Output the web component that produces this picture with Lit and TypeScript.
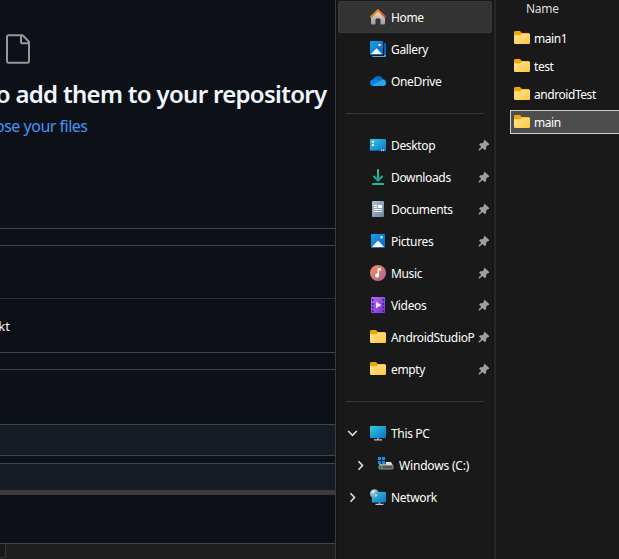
import { LitElement, html, css, svg, nothing } from "lit";
import { customElement, property } from "lit/decorators.js";

const folder = svg`
  <path d="M0 2.400Q0 1 1.400 1H6l1.800 2H15v5H0z" fill="#f2a600"/>
  <path d="M0 5.200h6.200L8 3.400h6.800q1.200 0 1.200 1.200v8.200q0 1.200-1.200 1.200H1.200Q0 14 0 12.800z" fill="url(#fold)"/>`;

const icons: Record<string, unknown> = {
  home: svg`
    <path d="M1 7.500 8 1.500l7 6V14.500q0 1-1 1h-3.500v-5q0-1-1-1h-3q-1 0-1 1v5H2q-1 0-1-1z" fill="url(#house)"/>
    <path d="M1 7.700 8 1.300l7 6.400" fill="none" stroke="url(#roof)" stroke-width="2" stroke-linecap="round" stroke-linejoin="round"/>`,
  gallery: svg`
    <path d="M2 14h11.500V2.500H15q1 0 1 1V15q0 1-1 1H3q-1 0-1-1z" fill="#5ba5e4"/>
    <path d="M13 2.500H15q1 0 1 1V14h-3z" fill="#0860ae"/>
    <path d="M13 1h1v14H1v-1h12z" fill="#191919"/>
    <rect width="13" height="14" rx="1" fill="url(#blue)"/>
    <rect x="8.500" y="3" width="2" height="2" fill="#fff"/>
    <path d="M1 13 6.500 7.200 12 13z" fill="#f4f9ff"/>`,
  cloud: svg`
    <path d="M3 7.300Q4.300 3 8.200 3q3.600 0 4.800 3.400l-3 4.600H3z" fill="#0a6bc8"/>
    <path d="M3.800 6.200Q0 6.500 0 9.800 0 13 3.800 13H9l3-4Q7.500 5.700 3.800 6.200z" fill="#0f80dd"/>
    <path d="M2 12.500 10 8q2-2 4-1.500 2 .8 2 3.500 0 3-3 3H4q-1.200 0-2-.5z" fill="#28a8ea"/>`,
  desktop: svg`
    <rect y="2" width="16" height="12" rx="1" fill="url(#desk)"/>
    <path d="M2 4h2v2H2zM2 7h2v2H2z" fill="#fff"/>
    <path d="M1 13h14v1H1z" fill="#0c5fa8"/>
    <path d="M11 12.600h1.200v1.200H11zM13 12.600h1.200v1.200H13z" fill="#e5f6ff"/>`,
  download: svg`
    <path d="M8 .3v11.200M3.500 7 8 11.500 12.500 7" fill="none" stroke="url(#down)" stroke-width="2"/>
    <rect x="2" y="14" width="12" height="2" rx=".6" fill="#22ba92"/>`,
  document: svg`
    <rect x="2" width="12" height="16" rx="1" fill="url(#doc)"/>
    <path d="M4 4h3v1H4zM4 6h3v1H4zM8 4h4v3H8zM4 8h8v1H4zM4 10h8v1H4z" fill="#fff"/>`,
  picture: svg`
    <rect x="1" y="1" width="14" height="14" rx="1" fill="url(#blue)"/>
    <circle cx="11.500" cy="4.300" r="1.200" fill="#d9f2ff"/>
    <path d="M2 14 7.200 8.300q.8-.8 1.600 0L14 14z" fill="#f8fbff"/>`,
  music: svg`
    <circle cx="8" cy="8" r="8" fill="url(#note)"/>
    <circle cx="7" cy="10.600" r="2" fill="#fff"/>
    <path d="M7.500 3.300H11v2.200H9v5.100H7.500z" fill="#fff"/>`,
  video: svg`
    <rect x="1" width="14" height="16" rx="1" fill="url(#film)"/>
    <path d="M2 2h1.500v2H2zM2 6h1.500v2H2zM2 9.500h1.500v2H2zM2 13h1.500v2H2zM12.500 2H14v2h-1.500zM12.500 6H14v2h-1.500zM12.500 9.500H14v2h-1.500zM12.500 13H14v2h-1.500z" fill="#4b1b96"/>
    <path d="M6 4.800v6.400L11.300 8z" fill="#f4ebff"/>`,
  folder,
  pc: svg`
    <path d="M7 13h2v2H7z" fill="#7b8790"/><path d="M4 14.300h8v1.200H4z" fill="#bcc7cf"/>
    <rect y="1" width="16" height="12" rx=".8" fill="url(#desk)"/>`,
  drive: svg`
    <path d="M2 5h11l2 3.500H1z" fill="#dfe1e2"/>
    <path d="M0 0h7.800v7.300H0z" fill="#191919"/>
    <path d="M0 0h3v3H0zM4 0h3v3H4zM0 4h3v3H0zM4 4h3v3H4z" fill="#1492e6"/>
    <rect x="1" y="8.200" width="14" height="3.800" rx=".6" fill="#515456" stroke="#aaadae" stroke-width=".8"/>
    <path d="M3 9.200h1.600v1.600H3z" fill="#22dd45"/>`,
  network: svg`
    <path d="M8.500 13h2v2h-2z" fill="#7b8790"/><path d="M5.500 14.800h8V16h-8z" fill="#bcc7cf"/>
    <rect x="2" y="3" width="14" height="10.500" rx=".8" fill="url(#desk)"/>
    <circle cx="4.500" cy="4.700" r="4.500" fill="url(#globe)"/>
    <path d="M2 2.200 4.300.9l1.300 1.400-1.700 1.900-2 .5zM4.600 5.200l2.200.2.400 1.400-1.700 1.500z" fill="#e4f1f7" opacity=".8"/>`,
};

interface Item {
  label: string;
  icon: string;
  pin?: boolean;
  chevron?: "open" | "closed";
  nested?: boolean;
  selected?: boolean;
}

const groups: Item[][] = [
  [
    { label: "Home", icon: "home", selected: true },
    { label: "Gallery", icon: "gallery" },
    { label: "OneDrive", icon: "cloud" },
  ],
  [
    { label: "Desktop", icon: "desktop", pin: true },
    { label: "Downloads", icon: "download", pin: true },
    { label: "Documents", icon: "document", pin: true },
    { label: "Pictures", icon: "picture", pin: true },
    { label: "Music", icon: "music", pin: true },
    { label: "Videos", icon: "video", pin: true },
    { label: "AndroidStudioP", icon: "folder", pin: true },
    { label: "empty", icon: "folder", pin: true },
  ],
  [
    { label: "This PC", icon: "pc", chevron: "open" },
    { label: "Windows (C:)", icon: "drive", chevron: "closed", nested: true },
    { label: "Network", icon: "network", chevron: "closed" },
  ],
];

@customElement("file-icon")
export class FileIcon extends LitElement {
  @property() name = "folder";
  static styles = css`
    :host { display: block; width: 16px; height: 16px; flex: none; }
    svg { display: block; }
  `;
  private grad(id: string, from: string, to: string, vertical = false) {
    return svg`<linearGradient id=${id} x1="0" y1="0" x2=${vertical ? 0 : 1} y2="1">
      <stop stop-color=${from}/><stop offset="1" stop-color=${to}/></linearGradient>`;
  }
  render() {
    return html`<svg width="16" height="16" viewBox="0 0 16 16">
      <defs>
        ${this.grad("fold", "#ffe59a", "#ffc83a")}
        ${this.grad("house", "#e2e2e2", "#9b9b9b", true)}
        ${this.grad("roof", "#f9a01b", "#d9480f")}
        ${this.grad("blue", "#1ca0ee", "#0763bd")}
        ${this.grad("desk", "#30cfe5", "#0b6fc4")}
        ${this.grad("down", "#2ccf8c", "#14a3a0", true)}
        ${this.grad("doc", "#b0c2d8", "#6a819f")}
        ${this.grad("note", "#f49352", "#a9609f")}
        ${this.grad("film", "#b06bf2", "#7a35d4")}
        ${this.grad("globe", "#b9e2f2", "#2a7fa8")}
      </defs>
      ${icons[this.name] ?? nothing}
    </svg>`;
  }
}

@customElement("nav-row")
export class NavRow extends LitElement {
  @property({ attribute: false }) item!: Item;
  static styles = css`
    .row {
      box-sizing: border-box; height: 32px; display: flex; align-items: center;
      padding-left: 5px; border: 1px solid transparent; border-radius: 2px;
    }
    .selected { background: #333; border-color: #3a3a3a; }
    .nested { padding-left: 13px; }
    .chevron { width: 16px; height: 16px; margin-right: 10px; flex: none; }
    .label {
      margin-left: 5px; padding-top: 2px; flex: 1; min-width: 0; white-space: nowrap;
      font: 12px/18px "Noto Sans", sans-serif; letter-spacing: -0.340px; color: #fff;
    }
    .nested .label { letter-spacing: -0.180px; }
    .pin { flex: none; width: 12px; height: 12px; margin: 0 1px 0 1px; }
  `;
  render() {
    const { label, icon, pin, chevron, nested, selected } = this.item;
    return html`<div class="row ${selected ? "selected" : ""} ${nested ? "nested" : ""}">
      <svg class="chevron" viewBox="0 0 16 16">
        ${chevron
          ? svg`<path d=${chevron === "open" ? "M4.200 6l4.300 4.300L12.800 6" : "M6.500 4.200l4 4.300-4 4.300"}
              fill="none" stroke="#e0e0e0" stroke-width="1.600"/>`
          : nothing}
      </svg>
      <file-icon name=${icon}></file-icon>
      <span class="label">${label}</span>
      ${pin
        ? html`<svg class="pin" viewBox="0 0 12 12">
            <path d="M6.700.8 11.400 5.300l-1.200 1-.7-.1L8 7.900l.1 2.200-1.200 1.100L4.500 9 1.600 11.500H.7v-.9L3.200 7.700 1 5.400l1.200-1.200 2.200.1L6.100 2.600l-.4-1z" fill="#96a1a8"/>
          </svg>`
        : nothing}
    </div>`;
  }
}

@customElement("app-root")
export class AppRoot extends LitElement {
  static styles = css`
    :host {
      display: grid; grid-template-columns: 335px 1px 2px 154px 2px 2px 1fr;
      width: 619px; height: 559px; overflow: hidden; background: #191919;
      font-family: "Noto Sans", sans-serif;
    }
    .web { background: #0d1117; display: flex; flex-direction: column; height: 559px; overflow: hidden; }
    .edge { background: #3a3b3d; }
    .gap { background: #151515; }
    .split { background: #161616; }
    .split-line { background: #272727; }
    .drop { box-sizing: border-box; height: 228px; flex: none; padding-top: 33px; }
    .page-icon { display: block; margin-left: 2px; }
    .title, .choose, .file { display: flex; justify-content: flex-end; white-space: nowrap; }
    .title {
      width: 326.500px; margin-top: 12px; font: 600 24px/34px "Noto Sans", sans-serif;
      letter-spacing: -0.700px; color: #f0f6fc;
    }
    .choose { width: 87.500px; margin-top: 3px; font-size: 16px; letter-spacing: -0.500px; line-height: 24px; color: #4493f8; }
    .line { height: 1px; flex: none; background: #3d444d; }
    .dim { background: #2c323a; }
    .space { flex: none; height: 16px; }
    .tall { height: 52px; }
    .file { width: 10px; height: 53px; align-items: center; flex: none; font-size: 13px; color: #f0f6fc; }
    .deep { height: 54px; }
    .band { flex: none; height: 30px; background: #151b23; }
    .short { height: 7px; }
    .lower { height: 26px; }
    .scroll { flex: none; height: 5px; background: #3b3b3b; }
    .blank { height: 48px; }
    .foot { flex: 1; display: flex; background: #1f1f1f; }
    .corner { width: 6px; box-sizing: border-box; height: 14px; background: #191919; border-bottom: 1px solid #333; border-right: 1px solid #333; flex: none; }
    .nav { padding-top: 1px; height: 558px; min-width: 0; }
    .divider { height: 32px; display: flex; align-items: center; padding: 0 8px; }
    .rule { height: 1px; flex: 1; background: #393939; }
    .files { min-width: 0; padding-left: 14px; overflow: hidden; }
    .name { margin: -1px 0 8px 16px; height: 19px; font-size: 12px; letter-spacing: -0.300px; line-height: 19px; color: #dedede; }
    .entry {
      box-sizing: border-box; width: 130px; height: 24px; margin-bottom: 4px; padding-left: 3px;
      display: flex; align-items: center; gap: 4px; border: 1px solid transparent;
      font-size: 12px; letter-spacing: -0.440px; line-height: 18px; color: #fff; white-space: nowrap;
    }
    .entry span { padding-top: 2px; }
    .active { background: #4d4d4d; border-color: #d0d0d0; }
  `;
  render() {
    return html`
      <div class="web">
        <div class="drop">
          <svg class="page-icon" width="32" height="32" viewBox="0 0 24 24" fill="#9198a1">
            <path d="M3 3a2 2 0 0 1 2-2h9.982a2 2 0 0 1 1.414.586l4.018 4.018A2 2 0 0 1 21 7.018V21a2 2 0 0 1-2 2H4.750A1.750 1.750 0 0 1 3 21.250Zm1.750-.5a.25.25 0 0 0-.25.25v18.500c0 .138.112.25.25.25h14.500a.25.25 0 0 0 .25-.25V8.500h-4a2 2 0 0 1-2-2v-4Zm10.250 0v4a.5.5 0 0 0 .5.5h4a.5.500 0 0 0-.146-.336l-4.018-4.018A.5.500 0 0 0 15 2.500Z"/>
          </svg>
          <div class="title"><span>o add them to your repository</span></div>
          <div class="choose"><span>ose your files</span></div>
        </div>
        <div class="line"></div><div class="space"></div>
        <div class="line"></div><div class="space tall"></div>
        <div class="line dim"></div><div class="file"><span>kt</span></div>
        <div class="line"></div><div class="space"></div>
        <div class="line"></div><div class="space deep"></div>
        <div class="line"></div><div class="band"></div>
        <div class="line"></div><div class="space short"></div>
        <div class="line"></div><div class="band lower"></div>
        <div class="scroll"></div><div class="space blank"></div>
        <div class="line"></div>
        <div class="foot"><div class="corner"></div></div>
      </div>
      <div class="edge"></div>
      <div class="gap"></div>
      <div class="nav">
        ${groups.map(
          (group, i) => html`
            ${i ? html`<div class="divider"><div class="rule"></div></div>` : nothing}
            ${group.map((item) => html`<nav-row .item=${item}></nav-row>`)}
          `,
        )}
      </div>
      <div class="split"></div>
      <div class="split-line"></div>
      <div class="files">
        <div class="name">Name</div>
        ${["main1", "test", "androidTest", "main"].map(
          (name, i) => html`<div class="entry ${i === 3 ? "active" : ""}">
            <file-icon></file-icon><span>${name}</span>
          </div>`,
        )}
      </div>
    `;
  }
}
